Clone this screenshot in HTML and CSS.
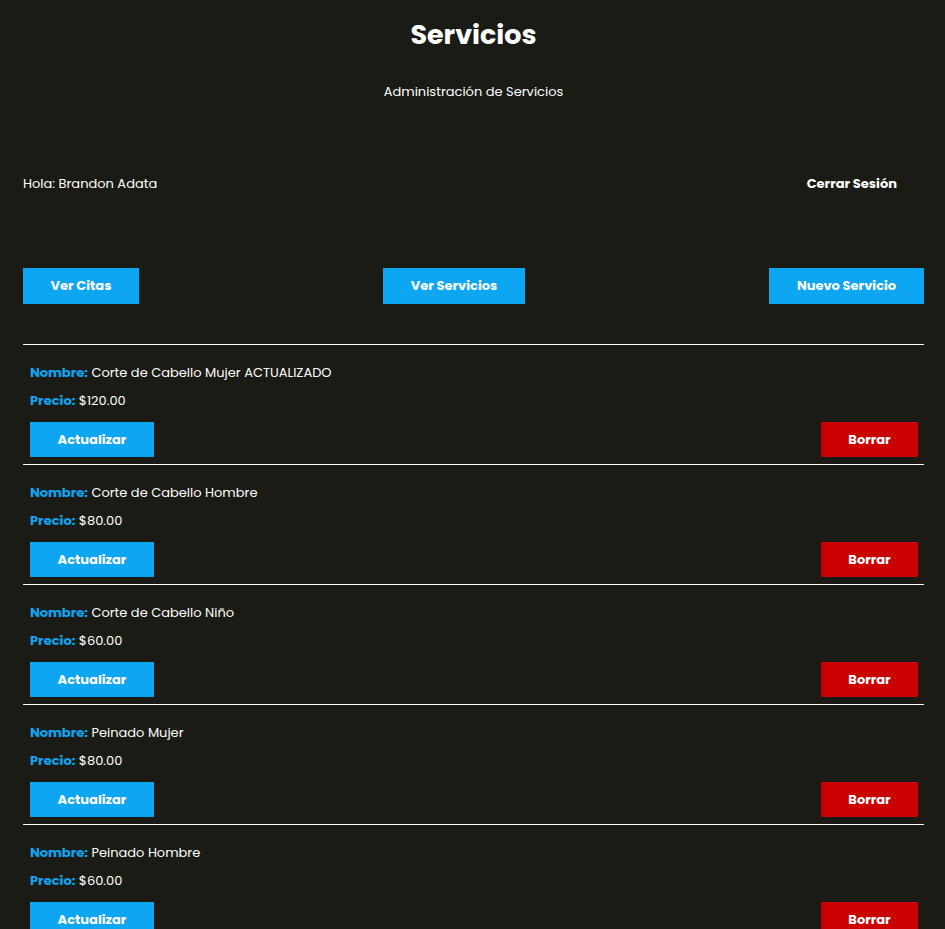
FILE: index.html
```
<!DOCTYPE html>
<html lang="es">
<head>
<meta charset="utf-8">
<meta name="viewport" content="width=device-width, initial-scale=1">
<title>Servicios</title>
<link rel="stylesheet" href="styles.css">
</head>
<body>
<main class="app">
  <h1 class="title">Servicios</h1>
  <p class="subtitle">Administración de Servicios</p>
  <div class="bar">
    <p class="greeting">Hola: Brandon Adata</p>
    <a class="logout" href="#">Cerrar Sesión</a>
  </div>
  <nav class="nav">
    <a class="button button-short" href="#">Ver Citas</a>
    <a class="button button-medium" href="#">Ver Servicios</a>
    <a class="button button-long" href="#">Nuevo Servicio</a>
  </nav>
  <ul class="services">
    <li class="service">
      <p class="field"><span class="label">Nombre:</span> <span>Corte de Cabello Mujer ACTUALIZADO</span></p>
      <p class="field"><span class="label">Precio:</span> <span>$120.00</span></p>
      <div class="actions"><a class="button button-update" href="#">Actualizar</a><button class="button button-delete" type="button">Borrar</button></div>
    </li>
    <li class="service">
      <p class="field"><span class="label">Nombre:</span> <span>Corte de Cabello Hombre</span></p>
      <p class="field"><span class="label">Precio:</span> <span>$80.00</span></p>
      <div class="actions"><a class="button button-update" href="#">Actualizar</a><button class="button button-delete" type="button">Borrar</button></div>
    </li>
    <li class="service">
      <p class="field"><span class="label">Nombre:</span> <span>Corte de Cabello Niño</span></p>
      <p class="field"><span class="label">Precio:</span> <span>$60.00</span></p>
      <div class="actions"><a class="button button-update" href="#">Actualizar</a><button class="button button-delete" type="button">Borrar</button></div>
    </li>
    <li class="service">
      <p class="field"><span class="label">Nombre:</span> <span>Peinado Mujer</span></p>
      <p class="field"><span class="label">Precio:</span> <span>$80.00</span></p>
      <div class="actions"><a class="button button-update" href="#">Actualizar</a><button class="button button-delete" type="button">Borrar</button></div>
    </li>
    <li class="service">
      <p class="field"><span class="label">Nombre:</span> <span>Peinado Hombre</span></p>
      <p class="field"><span class="label">Precio:</span> <span>$60.00</span></p>
      <div class="actions"><a class="button button-update" href="#">Actualizar</a><button class="button button-delete" type="button">Borrar</button></div>
    </li>
  </ul>
</main>
</body>
</html>
```
FILE: styles.css
```
* {
  box-sizing: border-box;
}

body {
  margin: 0;
  height: 100vh;
  overflow: hidden;
  background: #1a1b15;
  color: #fff;
  font-family: Poppins, Inter, sans-serif;
  font-size: 13px;
  line-height: 24px;
}

h1,
p,
ul {
  margin: 0;
  padding: 0;
}

a {
  color: inherit;
  text-decoration: none;
}

.app {
  padding: 15px 21px 0 23px;
}

.title {
  font-size: 27px;
  line-height: 40px;
  font-weight: 700;
  text-align: center;
}

.subtitle {
  margin-top: 25px;
  text-align: center;
}

.bar {
  display: flex;
  justify-content: space-between;
  align-items: center;
  margin-top: 68px;
  padding-right: 27px;
}

.logout {
  font-weight: 700;
}

.nav {
  display: flex;
  justify-content: space-between;
  margin-top: 72px;
}

.button {
  display: block;
  border: 0;
  background: #0da6f3;
  color: #fff;
  font: inherit;
  font-weight: 700;
  line-height: 24px;
  padding: 6px 0;
  text-align: center;
  cursor: pointer;
}

.button-short {
  min-width: 116px;
}

.button-medium {
  min-width: 142px;
}

.button-long {
  min-width: 155px;
}

.button-update,
.button-delete {
  padding-bottom: 5px;
}

.button-update {
  min-width: 124px;
}

.button-delete {
  min-width: 97px;
  background: #cb0000;
}

.services {
  margin-top: 40px;
  list-style: none;
}

.service {
  border-top: 1px solid #fff;
  padding: 16px 6px 7px 7px;
}

.field {
  margin-bottom: 4px;
}

.label {
  color: #0da6f3;
  font-weight: 700;
}

.actions {
  display: flex;
  justify-content: space-between;
  margin-top: 9px;
}
```
